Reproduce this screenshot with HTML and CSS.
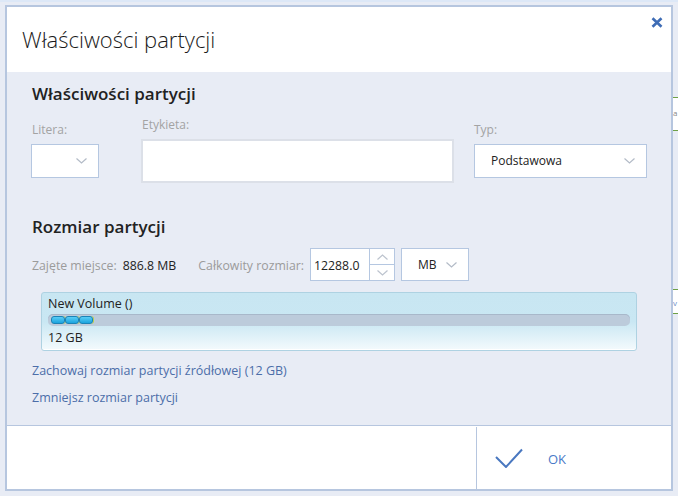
FILE: index.html
```html
<!DOCTYPE html>
<html lang="pl">
<head>
<meta charset="utf-8">
<title>Właściwości partycji</title>
<link rel="stylesheet" href="styles.css">
</head>
<body>
<div class="screen">
  <div class="dialog">
    <header class="header">
      <h1 class="title">Właściwości partycji</h1>
      <button class="close" aria-label="Zamknij">
        <svg width="12" height="11" viewBox="0 0 12 11"><path d="M1.5 1.2 L10.5 9.8 M10.5 1.2 L1.5 9.8" stroke="#3e6cb5" stroke-width="2.6" fill="none"/></svg>
      </button>
    </header>
    <main class="content">
      <h2 class="section-title">Właściwości partycji</h2>
      <div class="fields">
        <div class="field field-letter">
          <span class="label">Litera:</span>
          <div class="select">
            <svg class="chev" width="11" height="6" viewBox="0 0 11 6"><polyline points="0.5,0.5 5.5,5 10.5,0.5" fill="none" stroke="#b3bbc7" stroke-width="1.2"/></svg>
          </div>
        </div>
        <div class="field field-name">
          <span class="label">Etykieta:</span>
          <div class="text-input"></div>
        </div>
        <div class="field field-type">
          <span class="label">Typ:</span>
          <div class="select">
            <span class="select-text">Podstawowa</span>
            <svg class="chev" width="11" height="6" viewBox="0 0 11 6"><polyline points="0.5,0.5 5.5,5 10.5,0.5" fill="none" stroke="#b3bbc7" stroke-width="1.2"/></svg>
          </div>
        </div>
      </div>

      <h2 class="section-title section-size">Rozmiar partycji</h2>
      <div class="size-row">
        <span class="muted">Zajęte miejsce:</span>
        <span class="value">886.8 MB</span>
        <span class="muted total">Całkowity rozmiar:</span>
        <div class="spin">
          <span class="spin-value">12288.0</span>
          <div class="spin-buttons">
            <span class="spin-btn spin-up"><svg width="11" height="6" viewBox="0 0 11 6"><polyline points="0.5,5.5 5.5,1 10.5,5.5" fill="none" stroke="#bcc3ce" stroke-width="1.2"/></svg></span>
            <span class="spin-btn"><svg width="11" height="6" viewBox="0 0 11 6"><polyline points="0.5,0.5 5.5,5 10.5,0.5" fill="none" stroke="#bcc3ce" stroke-width="1.2"/></svg></span>
          </div>
        </div>
        <div class="select unit">
          <span class="select-text">MB</span>
          <svg class="chev" width="11" height="6" viewBox="0 0 11 6"><polyline points="0.5,0.5 5.5,5 10.5,0.5" fill="none" stroke="#b3bbc7" stroke-width="1.2"/></svg>
        </div>
      </div>

      <div class="volume">
        <div class="volume-name">New Volume ()</div>
        <div class="track">
          <span class="seg"></span><span class="seg"></span><span class="seg"></span>
        </div>
        <div class="volume-size">12 GB</div>
      </div>

      <a class="link link-first" href="#">Zachowaj rozmiar partycji źródłowej (12 GB)</a>
      <a class="link link-second" href="#">Zmniejsz rozmiar partycji</a>
    </main>
    <footer class="footer">
      <div class="footer-left"></div>
      <button class="ok">
        <svg width="28" height="20" viewBox="0 0 28 20"><polyline points="1,9 11,19 27,1.5" fill="none" stroke="#4a78c0" stroke-width="2"/></svg>
        <span class="ok-text">OK</span>
      </button>
    </footer>
  </div>
  <div class="peek">
    <div class="peek-item peek-a">a</div>
    <div class="peek-item peek-v">v</div>
  </div>
</div>
</body>
</html>
```
FILE: styles.css
```css
* { box-sizing: border-box; }
html, body { margin: 0; padding: 0; }
body {
  width: 678px;
  height: 496px;
  overflow: hidden;
  background: #e8ecf5;
  font-family: "Open Sans", "Noto Sans", sans-serif;
  color: #222;
}
.screen {
  display: flex;
  align-items: flex-start;
  border-top: 2px solid #dde8f7;
  padding-top: 3px;
  padding-left: 5px;
}
.dialog {
  width: 668px;
  height: 486px;
  flex: none;
  border: 2px solid #b6c6df;
  background: #fff;
  display: flex;
  flex-direction: column;
}
.header {
  height: 65px;
  flex: none;
  display: flex;
  align-items: center;
  padding-left: 15px;
  position: relative;
  background: #fff;
}
.title {
  margin: 0;
  font-size: 22px;
  font-weight: 300;
  line-height: 29px;
  color: #1a1a1a;
}
.close {
  position: absolute;
  top: 10px;
  right: 8px;
  width: 12px;
  height: 11px;
  padding: 0;
  border: 0;
  background: none;
  display: block;
}
.close svg { display: block; }

.content {
  height: 353px;
  flex: none;
  background: #e8ecf5;
  padding: 12px 0 0 25px;
}
.section-title {
  margin: 0;
  font-size: 17px;
  font-weight: 600;
  line-height: 20px;
  color: #222;
}
.fields {
  display: flex;
  align-items: flex-start;
  margin-top: 13px;
}
.field {
  display: flex;
  flex-direction: column;
}
.label {
  font-size: 12px;
  line-height: 16px;
  color: #a3a3a3;
  margin-bottom: 6px;
  padding-left: 1px;
}
.field-letter { width: 68px; margin-left: -1px; margin-top: 5px; }
.field-name { width: 313px; margin-left: 42px; }
.field-type { width: 173px; margin-left: 20px; margin-top: 5px; }
.field-type .label { padding-left: 0; }

.select {
  height: 34px;
  background: #fff;
  border: 1px solid #b5c7e1;
  display: flex;
  align-items: center;
  padding: 0 11px 0 16px;
}
.select-text {
  font-size: 12px;
  line-height: 16px;
  color: #222;
}
.chev { margin-left: auto; display: block; }
.text-input {
  height: 44px;
  background: #fff;
  border: 2px solid #dce0e8;
}

.section-size { margin-top: 34px; }
.size-row {
  display: flex;
  align-items: center;
  height: 33px;
  margin-top: 11px;
  font-size: 12.3px;
  line-height: 16px;
}
.muted { color: #9b9b9b; padding-top: 2px; }
.value { margin-left: 6px; color: #222; padding-top: 2px; }
.total { margin-left: 22px; }
.spin {
  margin-left: 6px;
  width: 85px;
  height: 33px;
  display: flex;
  border: 1px solid #b5c7e1;
  background: #fff;
}
.spin-value {
  width: 59px;
  border-right: 1px solid #b5c7e1;
  padding-left: 3px;
  padding-top: 2px;
  display: flex;
  align-items: center;
  color: #222;
}
.spin-buttons {
  flex: 1;
  display: flex;
  flex-direction: column;
}
.spin-btn {
  flex: 1;
  display: flex;
  align-items: center;
  justify-content: center;
}
.spin-up { border-bottom: 1px solid #b5c7e1; }
.spin-btn svg { display: block; }
.unit {
  margin-left: 6px;
  width: 68px;
  height: 33px;
}

.volume {
  margin-top: 11px;
  margin-left: 9px;
  width: 596px;
  height: 59px;
  border: 1px solid #aed2e2;
  border-radius: 3px;
  background: linear-gradient(to bottom, #c8e6f2 0%, #c9e7f3 50%, #f4fafd 100%);
  box-shadow: inset 0 -1px 0 #ffffff;
  padding: 3px 6px 0 6px;
  font-size: 12.5px;
  line-height: 16px;
  color: #222;
}
.track {
  margin-top: 2px;
  height: 12px;
  border-radius: 5px;
  background: #bccbdb;
  box-shadow: inset 0 1px 0 #a8b8ca;
  display: flex;
  align-items: center;
  padding-left: 3px;
}
.seg {
  width: 14px;
  height: 8px;
  border: 1px solid #1b83b6;
  border-radius: 3px;
  background: linear-gradient(to bottom, #59cdf6, #1aa4de);
  box-shadow: 1px 0 0 #b9cf52;
}
.volume-size { margin-top: 4px; }

.link {
  display: block;
  font-size: 12.5px;
  line-height: 16px;
  color: #4c6ea9;
  text-decoration: none;
  width: max-content;
}
.link-first { margin-top: 12px; }
.link-second { margin-top: 11px; }

.footer {
  height: 64px;
  flex: none;
  display: flex;
  border-top: 1px solid #b6c6df;
  background: #fff;
}
.footer-left {
  width: 470px;
  margin-top: 1px;
  border-right: 1px solid #b6c6df;
}
.ok {
  flex: 1;
  display: flex;
  align-items: center;
  padding: 0 0 0 18px;
  border: 0;
  background: #fff;
  font-family: inherit;
}
.ok svg { display: block; }
.ok-text {
  margin-left: 25px;
  font-size: 13px;
  font-weight: 400;
  color: #4a7ac8;
  padding-top: 2px;
}

.peek {
  width: 5px;
  flex: none;
  display: flex;
  flex-direction: column;
  overflow: hidden;
}
.peek-item {
  background: #fff;
  border-top: 1px solid #6ea046;
  border-bottom: 1px solid #6ea046;
  font-size: 8px;
  line-height: 12px;
  white-space: nowrap;
}
.peek-a { margin-top: 92px; height: 34px; color: #888; padding-top: 9px; }
.peek-v { margin-top: 158px; height: 25px; color: #6a8cc8; padding-top: 7px; }
```
